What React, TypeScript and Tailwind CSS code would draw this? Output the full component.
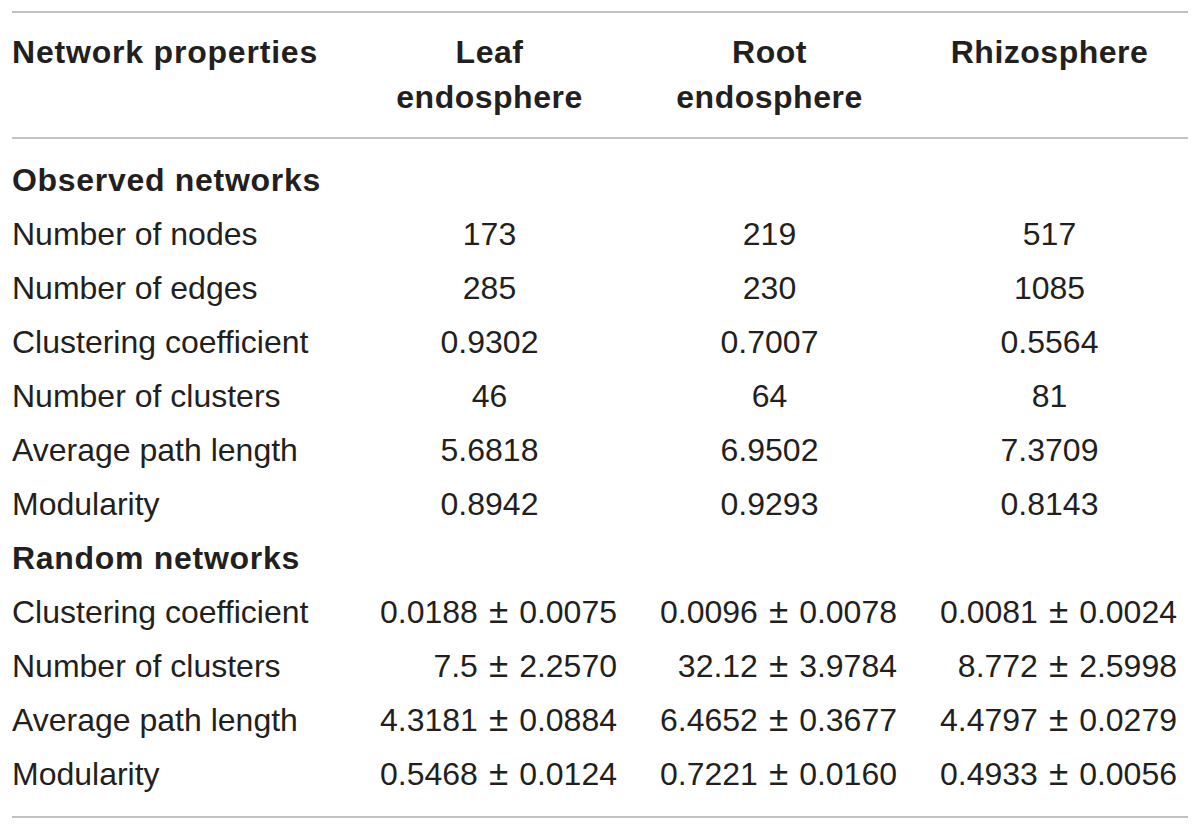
const observed: [string, string, string, string][] = [
  ['Number of nodes', '173', '219', '517'],
  ['Number of edges', '285', '230', '1085'],
  ['Clustering coefficient', '0.9302', '0.7007', '0.5564'],
  ['Number of clusters', '46', '64', '81'],
  ['Average path length', '5.6818', '6.9502', '7.3709'],
  ['Modularity', '0.8942', '0.9293', '0.8143'],
];

const random: [string, [string, string], [string, string], [string, string]][] = [
  ['Clustering coefficient', ['0.0188', '0.0075'], ['0.0096', '0.0078'], ['0.0081', '0.0024']],
  ['Number of clusters', ['7.5', '2.2570'], ['32.12', '3.9784'], ['8.772', '2.5998']],
  ['Average path length', ['4.3181', '0.0884'], ['6.4652', '0.3677'], ['4.4797', '0.0279']],
  ['Modularity', ['0.5468', '0.0124'], ['0.7221', '0.0160'], ['0.4933', '0.0056']],
];

const grid = 'grid grid-cols-[325px_255px_255px_255px] gap-x-[25px]';

function PlusMinus({ v }: { v: [string, string] }) {
  return (
    <div className="text-right whitespace-nowrap">
      {v[0]}
      <span className="px-[11px] text-[35px] leading-none">±</span>
      {v[1]}
    </div>
  );
}

function SectionTitle({ label }: { label: string }) {
  return (
    <div className={`${grid} h-[54px] items-center`}>
      <div className="font-bold tracking-[0.7px]">{label}</div>
    </div>
  );
}

export default function App() {
  return (
    <div
      className="min-h-[829px] bg-white pt-[11px] text-[32px] text-[#231f20]"
      style={{ fontFamily: '"Liberation Sans", Arial, sans-serif' }}
    >
      <div className="ml-[12px] w-[1176px]">
        <div className="h-[2px] bg-[#c2c2c2]" />

        {/* header */}
        <div className={`${grid} pt-[17px] pb-[17px] leading-[45px] font-bold tracking-[0.5px]`}>
          <div className="tracking-[0.8px]">Network properties</div>
          <div className="text-center">
            Leaf
            <br />
            endosphere
          </div>
          <div className="text-center">
            Root
            <br />
            endosphere
          </div>
          <div className="text-center">Rhizosphere</div>
        </div>

        <div className="h-[2px] bg-[#c2c2c2]" />

        <div className="pt-[14px] pb-[15px]">
          <SectionTitle label="Observed networks" />
          {observed.map((r) => (
            <div key={r[0]} className={`${grid} h-[54px] items-center`}>
              <div>{r[0]}</div>
              <div className="text-center">{r[1]}</div>
              <div className="text-center">{r[2]}</div>
              <div className="text-center">{r[3]}</div>
            </div>
          ))}

          <SectionTitle label="Random networks" />
          {random.map((r) => (
            <div key={r[0]} className={`${grid} h-[54px] items-center`}>
              <div>{r[0]}</div>
              <PlusMinus v={r[1]} />
              <PlusMinus v={r[2]} />
              <PlusMinus v={r[3]} />
            </div>
          ))}
        </div>

        <div className="h-[2px] bg-[#c2c2c2]" />
      </div>
    </div>
  );
}
